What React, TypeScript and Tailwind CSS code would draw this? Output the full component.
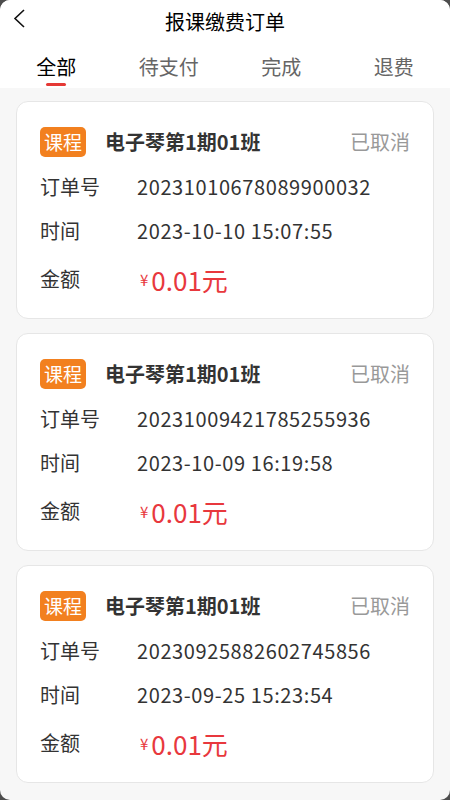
const orders = [
  { no: "20231010678089900032", time: "2023-10-10 15:07:55" },
  { no: "20231009421785255936", time: "2023-10-09 16:19:58" },
  { no: "20230925882602745856", time: "2023-09-25 15:23:54" },
]

const tabs = ["全部", "待支付", "完成", "退费"]

const OrderCard = ({ no, time }: { no: string; time: string }) => {
  return (
    <div className="h-[218px] bg-white border border-[#e6e6e6] rounded-[12px] px-[23px] pt-[24px]">
      <div className="flex items-center h-[32px]">
        <span className="w-[46px] h-[30px] rounded-[5px] bg-[#f2801f] text-white text-[19px] leading-[30px] text-center">
          课程
        </span>
        <span className="ml-[19px] text-[20px] font-bold text-[#333]">电子琴第1期01班</span>
        <span className="ml-auto text-[20px] text-[#999]">已取消</span>
      </div>
      <div className="mt-[7px] flex items-center h-[44px] text-[20px] text-[#333]">
        <span className="w-[97px]">订单号</span>
        <span className="tracking-[0.6px]">{no}</span>
      </div>
      <div className="flex items-center h-[44px] text-[20px] text-[#333]">
        <span className="w-[97px]">时间</span>
        <span className="tracking-[0.6px]">{time}</span>
      </div>
      <div className="flex items-center h-[52px] text-[#333]">
        <span className="w-[97px] text-[20px]">金额</span>
        <span className="text-[#e8383d] flex items-center">
          <span className="ml-[3px] text-[15px] mr-[3px] mt-[3px]">¥</span>
          <span className="text-[26px]">0.01元</span>
        </span>
      </div>
    </div>
  )
}

const App = () => {
  return (
    <div className="h-[800px] bg-[#4d4d4d] font-['Noto_Sans_CJK_SC',sans-serif]">
      <div className="h-full rounded-[10px] overflow-hidden bg-[#f7f7f7] flex flex-col">
        <div className="bg-white">
          <div className="relative h-[44px] flex items-center justify-center">
            <svg className="absolute left-[12px] top-[8px]" width="16" height="22" viewBox="0 0 16 22">
              <polyline points="12,2 3,10.5 12,19" fill="none" stroke="#111" strokeWidth="1.6" />
            </svg>
            <span className="text-[20px] text-black">报课缴费订单</span>
          </div>
          <div className="grid grid-cols-4 h-[44px]">
            {tabs.map((t, i) => (
              <div key={t} className="flex flex-col items-center pt-[8px]">
                <span className={`text-[20px] leading-[30px] ${i === 0 ? "text-black" : "text-[#666]"}`}>{t}</span>
                {i === 0 && <span className="mt-[1px] w-[20px] h-[3px] rounded-full bg-[#e53935]" />}
              </div>
            ))}
          </div>
        </div>

        <div className="flex flex-col gap-[14px] px-[16px] pt-[13px]">
          {orders.map((o) => (
            <OrderCard key={o.no} no={o.no} time={o.time} />
          ))}
        </div>
      </div>
    </div>
  )
}

export default App
